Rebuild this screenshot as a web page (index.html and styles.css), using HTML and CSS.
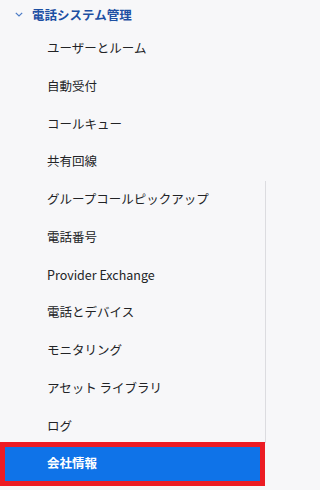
FILE: index.html
```html
<!DOCTYPE html>
<html lang="ja">
<head>
<meta charset="utf-8">
<link rel="stylesheet" href="styles.css">
</head>
<body>
<nav class="nav">
  <div class="group-head">
    <svg class="chev" width="8" height="5" viewBox="0 0 8 5"><path d="M0.8 0.8 L4 4 L7.2 0.8" fill="none" stroke="#4d7cc6" stroke-width="1.2"/></svg>
    <span class="group-title">電話システム管理</span>
  </div>
  <ul class="items">
    <li class="item">ユーザーとルーム</li>
    <li class="item">自動受付</li>
    <li class="item">コールキュー</li>
    <li class="item">共有回線</li>
    <li class="item">グループコールピックアップ</li>
    <li class="item">電話番号</li>
    <li class="item">Provider Exchange</li>
    <li class="item">電話とデバイス</li>
    <li class="item">モニタリング</li>
    <li class="item">アセット ライブラリ</li>
    <li class="item">ログ</li>
    <li class="item selected"><span class="sel-box">会社情報</span></li>
  </ul>
  <div class="scroll-thumb"></div>
</nav>
</body>
</html>
```
FILE: styles.css
```css
html, body {
  margin: 0;
  padding: 0;
  background: #f7f7f9;
}
body {
  width: 267px;
  height: 490px;
  overflow: hidden;
  font-family: "Noto Sans CJK JP", "Noto Sans", sans-serif;
  font-size: 12.5px;
  color: #222326;
}
.nav {
  position: relative;
  height: 490px;
}
.group-head {
  height: 29.6px;
  display: flex;
  align-items: center;
  padding-left: 15px;
  gap: 9px;
}
.chev {
  display: block;
  margin-top: -1px;
}
.group-title {
  font-weight: 700;
  color: #1d4fa3;
  font-size: 12.5px;
  line-height: 1;
}
.items {
  list-style: none;
  margin: 0;
  padding: 0;
}
.item {
  height: 37.75px;
  display: flex;
  align-items: center;
  padding-left: 47px;
  line-height: 1;
  white-space: nowrap;
}
.item.selected {
  padding-left: 5px;
}
.sel-box {
  display: flex;
  align-items: center;
  width: 213px;
  height: 34px;
  padding-left: 42px;
  background: #0f73e8;
  color: #ffffff;
  font-weight: 700;
  outline: 5px solid #ec1c24;
}
.scroll-thumb {
  position: absolute;
  right: 1px;
  top: 181px;
  width: 1.5px;
  height: 262px;
  background: #dcdce0;
}
```
